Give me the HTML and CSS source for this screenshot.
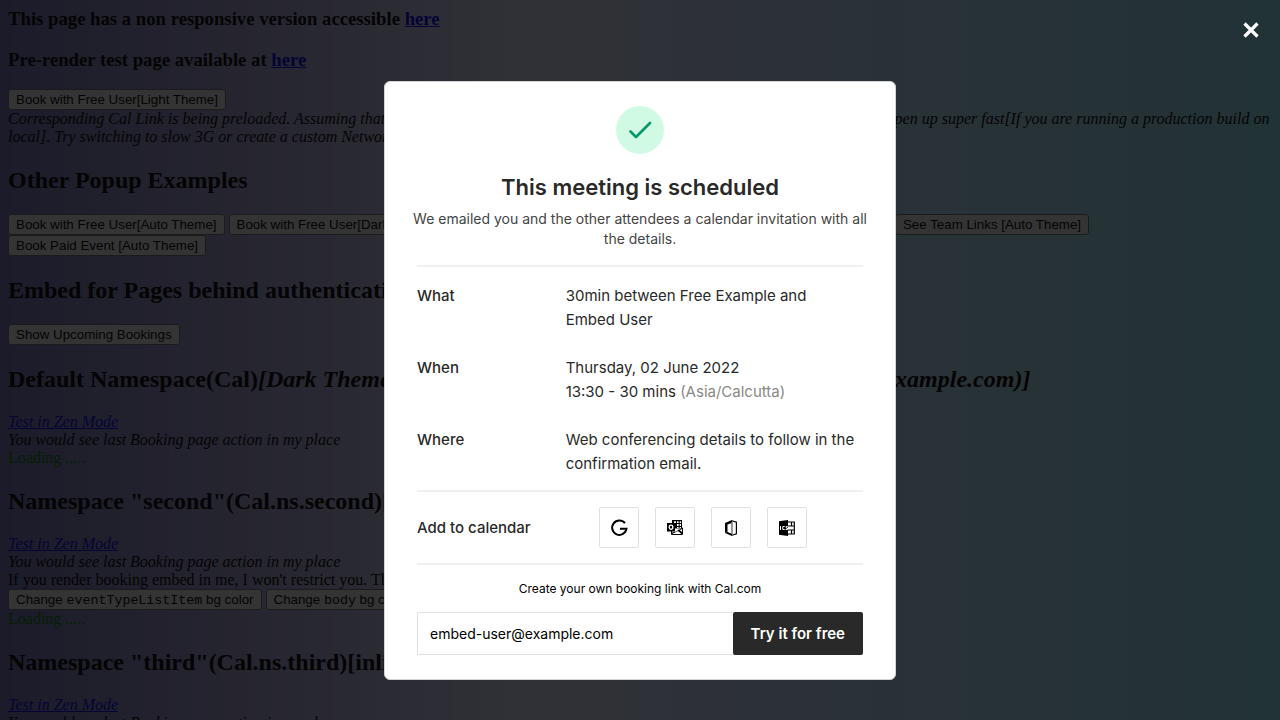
FILE: index.html
```html
<!DOCTYPE html>
<html lang="en">
<head>
<meta charset="utf-8">
<meta name="viewport" content="width=device-width, initial-scale=1">
<title>Embed Playground</title>
<link rel="stylesheet" href="styles.css">
</head>
<body class="page">
<main class="content">
  <h3 class="note">This page has a non responsive version accessible <a href="#">here</a></h3>
  <h3 class="note">Pre-render test page available at <a href="#">here</a></h3>
  <button class="btn">Book with Free User[Light Theme]</button>
  <div><i>Corresponding Cal Link is being preloaded. Assuming that it would take you some time to click this as you are reading this text, it would open up super fast[If you are running a production build on local]. Try switching to slow 3G or create a custom Network configuration which is impossibly slow</i></div>
  <h2 class="heading">Other Popup Examples</h2>
  <button class="btn">Book with Free User[Auto Theme]</button>
  <button class="btn">Book with Free User[Dark Theme]</button>
  <button class="btn">Book with Test Team[Light Theme]</button>
  <button class="btn">Book with Test Team[Dark Theme]</button>
  <button class="btn">See Team Links [Auto Theme]</button>
  <button class="btn">Book Paid Event [Auto Theme]</button>
  <h2 class="heading">Embed for Pages behind authentication</h2>
  <button class="btn">Show Upcoming Bookings</button>
  <h2 class="heading">Default Namespace(Cal)<i>[Dark Theme][inline][Guests(janedoe@example.com and test@example.com)]</i></h2>
  <div><i><a href="#">Test in Zen Mode</a></i></div>
  <div><i>You would see last Booking page action in my place</i></div>
  <div class="loading">Loading .....</div>
  <h2 class="heading">Namespace "second"(Cal.ns.second)[inline]</h2>
  <div><i><a href="#">Test in Zen Mode</a></i></div>
  <div><i>You would see last Booking page action in my place</i></div>
  <div>If you render booking embed in me, I won't restrict you. The entire page is yours.</div>
  <button class="btn">Change <code>eventTypeListItem</code> bg color</button>
  <button class="btn">Change <code>body</code> bg color</button>
  <div class="loading">Loading .....</div>
  <h2 class="heading">Namespace "third"(Cal.ns.third)[inline]</h2>
  <div><i><a href="#">Test in Zen Mode</a></i></div>
  <div><i>You would see last Booking page action in my place</i></div>
</main>

<div class="overlay">
  <button class="close" aria-label="Close">
    <svg width="16" height="16" viewBox="0 0 16 16"><path d="M1.500 1.500 14.500 14.500M14.500 1.500 1.500 14.500" fill="none" stroke="#fff" stroke-width="3.200"/></svg>
  </button>
  <section class="card" role="dialog" aria-labelledby="title">
    <div class="badge">
      <svg width="24" height="24" viewBox="0 0 24 24"><path d="M2.500 13.500 8 19 22 5" fill="none" stroke="#059669" stroke-width="2.600" stroke-linecap="round" stroke-linejoin="round"/></svg>
    </div>
    <h1 class="title" id="title">This meeting is scheduled</h1>
    <p class="lead">We emailed you and the other attendees a calendar invitation with all<br>the details.</p>
    <dl class="details">
      <dt>What</dt>
      <dd>30min between Free Example and<br>Embed User</dd>
      <dt>When</dt>
      <dd>Thursday, 02 June 2022<br>13:30 - 30 mins <span class="zone">(Asia/Calcutta)</span></dd>
      <dt>Where</dt>
      <dd>Web conferencing details to follow in the confirmation email.</dd>
    </dl>
    <div class="calendars">
      <span class="calendars-label">Add to calendar</span>
      <div class="calendar-links">
        <a class="calendar" href="#" aria-label="Google Calendar">
          <svg width="18" height="18" viewBox="0 0 18 18"><path d="M15 4.200A7.200 7.200 0 1 0 16.500 9.700H10" fill="none" stroke="#000" stroke-width="2"/></svg>
        </a>
        <a class="calendar" href="#" aria-label="Outlook">
          <svg width="16" height="15" viewBox="0 0 16 15"><path d="M5 0h10v8.500H5z"/><path d="M7 1.300h2v1.700H7zM10 1.300h1.700v1.700H10zM12.700 1.300h1.300v1.700h-1.300zM10 4h1.700v2H10zM12.700 4h1.300v2h-1.300zM10 7h1.700v1.300H10zM12.700 7h1.300v1h-1.300z" fill="#fff"/><path d="M4.500 10.500v4H15.500V8L11 11" fill="#fff" stroke="#000"/><path d="M5 12.500V14l6-3 4 3.500V12l-3-2.500-3 2z"/><path d="M0 3h8v8.500H0z"/><ellipse cx="4" cy="7.200" rx="1.800" ry="2.100" fill="none" stroke="#fff" stroke-width="1.300"/></svg>
        </a>
        <a class="calendar" href="#" aria-label="Office 365">
          <svg width="14" height="16" viewBox="0 0 14 16"><path d="M8 0 1 3v10l2.500-1V4.500L8 3Z"/><path d="m1 13 7 3v-2.200L3.500 12Z"/><path d="m8 .7 4.400 1.500v11.600L8 15.300" fill="none" stroke="#000" stroke-width="1.200"/><path d="M8 2v12" stroke="#777" stroke-width="1.500"/></svg>
        </a>
        <a class="calendar" href="#" aria-label="ICS file">
          <svg width="16" height="16" viewBox="0 0 16 16"><path d="M0 1.200 9 0v16L0 14.800Z"/><path d="M9 2h6.300v12H9M9 6h6.300M9 10h6.300M12.500 2v4M12.500 10v4" fill="none" stroke="#000" stroke-width="1.200"/><path d="M1.500 6v4M5.700 6.500H3.800V9.500h1.900M8.700 6.500H7.200V8h1.300v1.500H6.700" fill="none" stroke="#fff"/></svg>
        </a>
      </div>
    </div>
    <form class="signup">
      <label class="signup-label" for="email">Create your own booking link with Cal.com</label>
      <div class="signup-row">
        <input class="email" id="email" type="email" value="embed-user@example.com">
        <button class="try" type="button">Try it for free</button>
      </div>
    </form>
  </section>
</div>
</body>
</html>
```
FILE: styles.css
```css
* { box-sizing: border-box; }

.page {
  margin: 0;
  height: 100vh;
  overflow: hidden;
  background: linear-gradient(90deg, rgb(120, 116, 186) 0%, rgb(221, 221, 255) 41%, rgb(148, 232, 249) 100%);
  font: 16px/18px "Liberation Serif", serif;
  color: #000;
}

.content { padding: 8px; }
.content a { color: #0000ee; }
.note { margin: 0 0 1em; line-height: 22px; }
.heading { margin: 20px 0; font-size: 24px; line-height: 28px; }
.loading { color: green; }

.btn {
  height: 21px;
  padding: 1px 7px;
  border: 1px solid #767676;
  border-radius: 3px;
  background: #efefef;
  color: #000;
  font-family: "Liberation Sans", sans-serif;
  line-height: 15px;
  vertical-align: top;
}
.btn code { font-family: "Liberation Mono", monospace; font-size: 1em; }

.overlay {
  position: fixed;
  inset: 0;
  display: flex;
  justify-content: center;
  align-items: flex-start;
  padding-top: 81px;
  background: rgba(5, 5, 5, 0.8);
  font-family: Inter, sans-serif;
}

.close {
  position: absolute;
  top: 22px;
  right: 21px;
  display: flex;
  padding: 0;
  border: 0;
  background: none;
}

.card {
  width: 100%;
  max-width: 512px;
  padding: 24px 32px;
  border: 1px solid #d4d4d4;
  border-radius: 6px;
  background: #fff;
  color: #292929;
}

.badge {
  display: flex;
  align-items: center;
  justify-content: center;
  width: 48px;
  height: 48px;
  margin: 0 auto;
  border-radius: 50%;
  background: #d1fae5;
}

.title {
  margin: 19px 0 8px;
  font-size: 22px;
  line-height: 28px;
  font-weight: 600;
  text-align: center;
}
.lead {
  margin: 0 -8px;
  color: #444;
  font-size: 14px;
  line-height: 20px;
  text-align: center;
}

.details {
  display: grid;
  grid-template-columns: 1fr 2fr;
  row-gap: 24px;
  margin: 16px 0 0;
  padding: 17px 0 14px;
  border-top: 2px solid #f0f0f0;
  border-bottom: 2px solid #f0f0f0;
  font-size: 15px;
  line-height: 24px;
}
.details dt { font-weight: 500; }
.details dd { margin: 0; }
.zone { color: #888; }

.calendars {
  display: flex;
  align-items: center;
  gap: 68px;
  padding: 15px 0;
  border-bottom: 2px solid #f0f0f0;
}
.calendars-label { font-size: 15px; line-height: 24px; font-weight: 500; }
.calendar-links { display: flex; gap: 16px; }
.calendar {
  display: flex;
  align-items: center;
  justify-content: center;
  width: 40px;
  height: 41px;
  border: 1px solid #e1e1e1;
  border-radius: 2px;
}

.signup { margin-top: 16px; }
.signup-label {
  display: block;
  margin-bottom: 15px;
  color: #000;
  font-size: 12px;
  line-height: 16px;
  text-align: center;
}
.signup-row { display: flex; }
.email {
  flex: 1;
  min-width: 0;
  height: 43px;
  padding: 0 12px;
  border: 1px solid #e1e1e1;
  border-right: 0;
  border-radius: 2px 0 0 2px;
  background: #fff;
  color: #000;
  font: 14px/20px Inter, sans-serif;
}
.try {
  height: 43px;
  padding: 1px 18px 0;
  border: 0;
  border-radius: 2px;
  background: #292929;
  color: #fff;
  font: 600 15px/24px Inter, sans-serif;
}
```
